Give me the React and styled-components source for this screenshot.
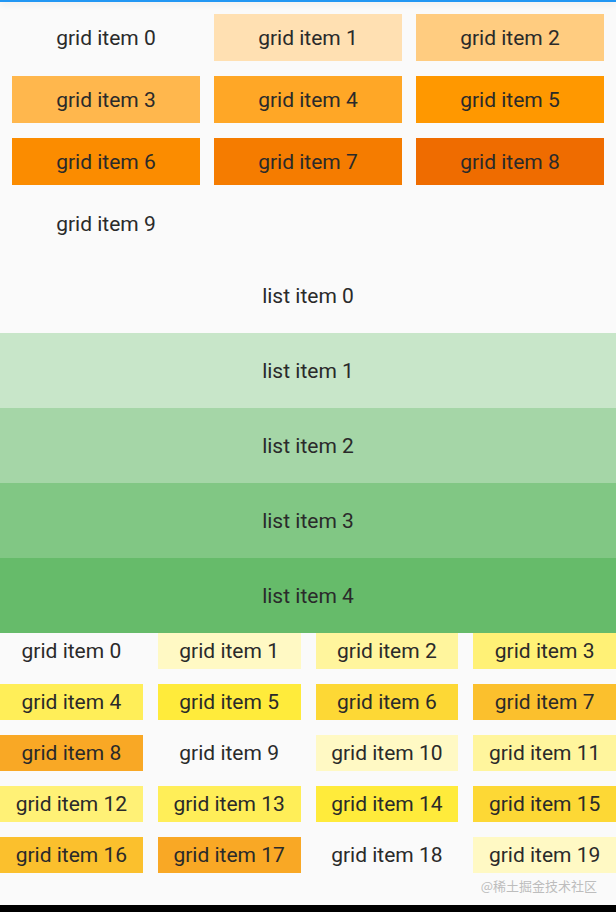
import React from 'react'
import styled, { createGlobalStyle } from 'styled-components';

const GlobalStyle = createGlobalStyle`
    html, body {
        margin: 0;
        padding: 0;
        background: #fafafa;
    }
    body {
        font-family: Roboto, "Noto Sans", sans-serif;
    }
`;

const orange = [null, '#ffe0b2', '#ffcc80', '#ffb74d', '#ffa726', '#ff9800', '#fb8c00', '#f57c00', '#ef6c00'];
const yellow = [null, '#fff9c4', '#fff59d', '#fff176', '#ffee58', '#ffeb3b', '#fdd835', '#fbc02d', '#f9a825'];
const green = [null, '#c8e6c9', '#a5d6a7', '#81c784', '#66bb6a'];

const Screen = styled.div`
    width: 616px;
    height: 912px;
    display: flex;
    flex-direction: column;
    background: #fafafa;
    overflow: hidden;
`;

const TopBar = styled.div`
    height: 2px;
    flex-shrink: 0;
    background: #2196f3;
    box-shadow: 0 2px 6px rgba(0, 0, 0, 0.12);
    position: relative;
    z-index: 1;
`;

const Scroll = styled.div`
    flex: 1;
    display: flex;
    flex-direction: column;
    min-height: 0;
`;

const Grid = styled.div`
    display: grid;
    grid-template-columns: repeat(${props => props.columns}, 1fr);
    grid-auto-rows: ${props => props.rowHeight}px;
    column-gap: ${props => props.colGap}px;
    row-gap: 15px;
    padding: ${props => props.pad};
`;

const Cell = styled.div`
    display: flex;
    align-items: center;
    justify-content: center;
    background: ${props => props.color || 'transparent'};
    color: #2a2a2a;
    font-size: 21px;
    white-space: nowrap;
`;

const List = styled.div`
    display: flex;
    flex-direction: column;
`;

const ListItem = styled.div`
    height: 75px;
    display: flex;
    align-items: center;
    justify-content: center;
    background: ${props => props.color || 'transparent'};
    color: #2a2a2a;
    font-size: 21px;
`;

const Footer = styled.div`
    flex: 1;
    display: flex;
    justify-content: flex-end;
    align-items: flex-start;
    padding: 3px 19px 0 0;
    color: #bdbdbd;
    font-size: 13px;
    font-family: "Noto Sans CJK SC", sans-serif;
`;

const BottomBar = styled.div`
    height: 7px;
    flex-shrink: 0;
    background: #000;
`;

const App = () => {
    return (
        <Screen>
            <GlobalStyle />
            <TopBar />
            <Scroll>
                <Grid columns={3} rowHeight={47} colGap={14} pad="12px 12px 11px">
                    {Array.from({ length: 10 }, (_, i) => (
                        <Cell key={i} color={orange[i % 9]}>grid item {i}</Cell>
                    ))}
                </Grid>
                <List>
                    {green.map((c, i) => (
                        <ListItem key={i} color={c}>list item {i}</ListItem>
                    ))}
                </List>
                <Grid columns={4} rowHeight={36} colGap={15} pad="0">
                    {Array.from({ length: 20 }, (_, i) => (
                        <Cell key={i} color={yellow[i % 9]}>grid item {i}</Cell>
                    ))}
                </Grid>
                <Footer>@稀土掘金技术社区</Footer>
            </Scroll>
            <BottomBar />
        </Screen>
    )
}

export default App;
